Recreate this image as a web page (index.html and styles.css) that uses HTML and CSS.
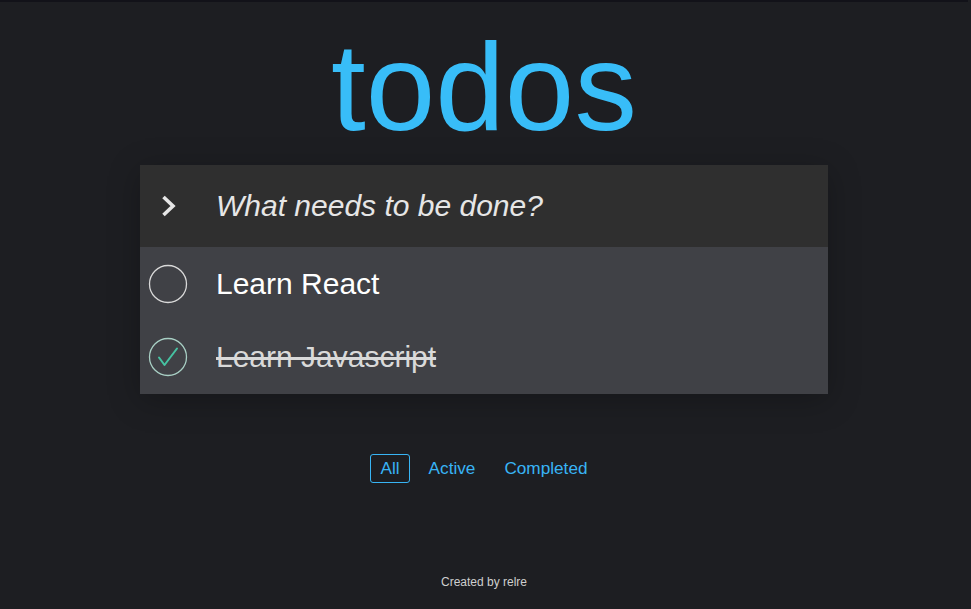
FILE: index.html
```html
<!DOCTYPE html>
<html lang="en">
<head>
<meta charset="UTF-8" />
<meta name="viewport" content="width=device-width, initial-scale=1.0" />
<title>todos</title>
<link rel="stylesheet" href="styles.css">
</head>
<body>

<div class="topbar"></div>

<h1 class="title">todos</h1>

<section class="todoapp">
  <header class="new-todo">
    <span class="toggle-all">
      <svg width="15" height="22" viewBox="0 0 15 22">
        <polyline points="2.5,2 12,11 2.5,20" fill="none" stroke="#e6e6e6" stroke-width="3.6" stroke-linejoin="miter" />
      </svg>
    </span>
    <input type="text" class="new-input" placeholder="What needs to be done?">
  </header>

  <ul class="todo-list">
    <li class="todo">
      <span class="check">
        <svg width="40" height="40" viewBox="0 0 40 40">
          <circle cx="20" cy="20" r="18.5" fill="none" stroke="#d9d9d9" stroke-width="1.3" />
        </svg>
      </span>
      <label>Learn React</label>
    </li>
    <li class="todo completed">
      <span class="check">
        <svg width="40" height="40" viewBox="0 0 40 40">
          <circle cx="20" cy="20" r="18.5" fill="none" stroke="#a8cfc4" stroke-width="1.3" />
          <polyline points="11,20.5 16.5,28 29,11.5" fill="none" stroke="#46c2a2" stroke-width="2" stroke-linecap="round" stroke-linejoin="round" />
        </svg>
      </span>
      <label>Learn Javascript</label>
    </li>
  </ul>
</section>

<nav class="filters">
  <a class="selected" href="#/">All</a>
  <a href="#/active">Active</a>
  <a href="#/completed">Completed</a>
</nav>

<footer class="info">Created by relre</footer>

</body>
</html>
```

FILE: styles.css
```css
html, body { margin: 0; padding: 0; }
body { font-family: "Liberation Sans", Arial, sans-serif; background-color: #1d1e22; color: #e6e6e6; height: 609px; padding-right: 3px; }
.topbar { height: 2px; background-color: #121219; }

.title { margin: 22px 0 16px; text-align: center; font-size: 125px; font-weight: 400; line-height: 1; color: #38bdf8; }

.todoapp { width: 688px; margin: 0 auto; box-shadow: 0 6px 30px rgba(0,0,0,0.25); }

.new-todo { display: flex; align-items: center; height: 82px; background-color: #2f2f2f; }
.toggle-all { display: flex; width: 76px; padding-left: 21px; box-sizing: border-box; }
.new-input {
  flex: 1; border: none; outline: none; background: transparent; padding: 0;
  font-family: inherit; font-size: 30px; font-style: italic; color: #e6e6e6;
}
.new-input::placeholder { color: #e6e6e6; opacity: 1; }

.todo-list { list-style: none; margin: 0; padding: 0; background-color: #404146; }
.todo { display: flex; align-items: center; height: 73.5px; }
.check { display: flex; width: 76px; padding-left: 8px; box-sizing: border-box; }
.todo label { font-size: 30px; color: #ffffff; }
.todo.completed label { color: #d9d9d9; text-decoration: line-through; }

.filters { display: flex; justify-content: center; gap: 9px; margin-top: 60px; }
.filters a { font-size: 17.2px; color: #38b4f5; text-decoration: none; padding: 3px 9px; border: 1px solid transparent; border-radius: 3px; }
.filters a.selected { border-color: #38b4f5; }

.info { margin-top: 92px; text-align: center; font-size: 12px; color: #cfcfcf; }
```
